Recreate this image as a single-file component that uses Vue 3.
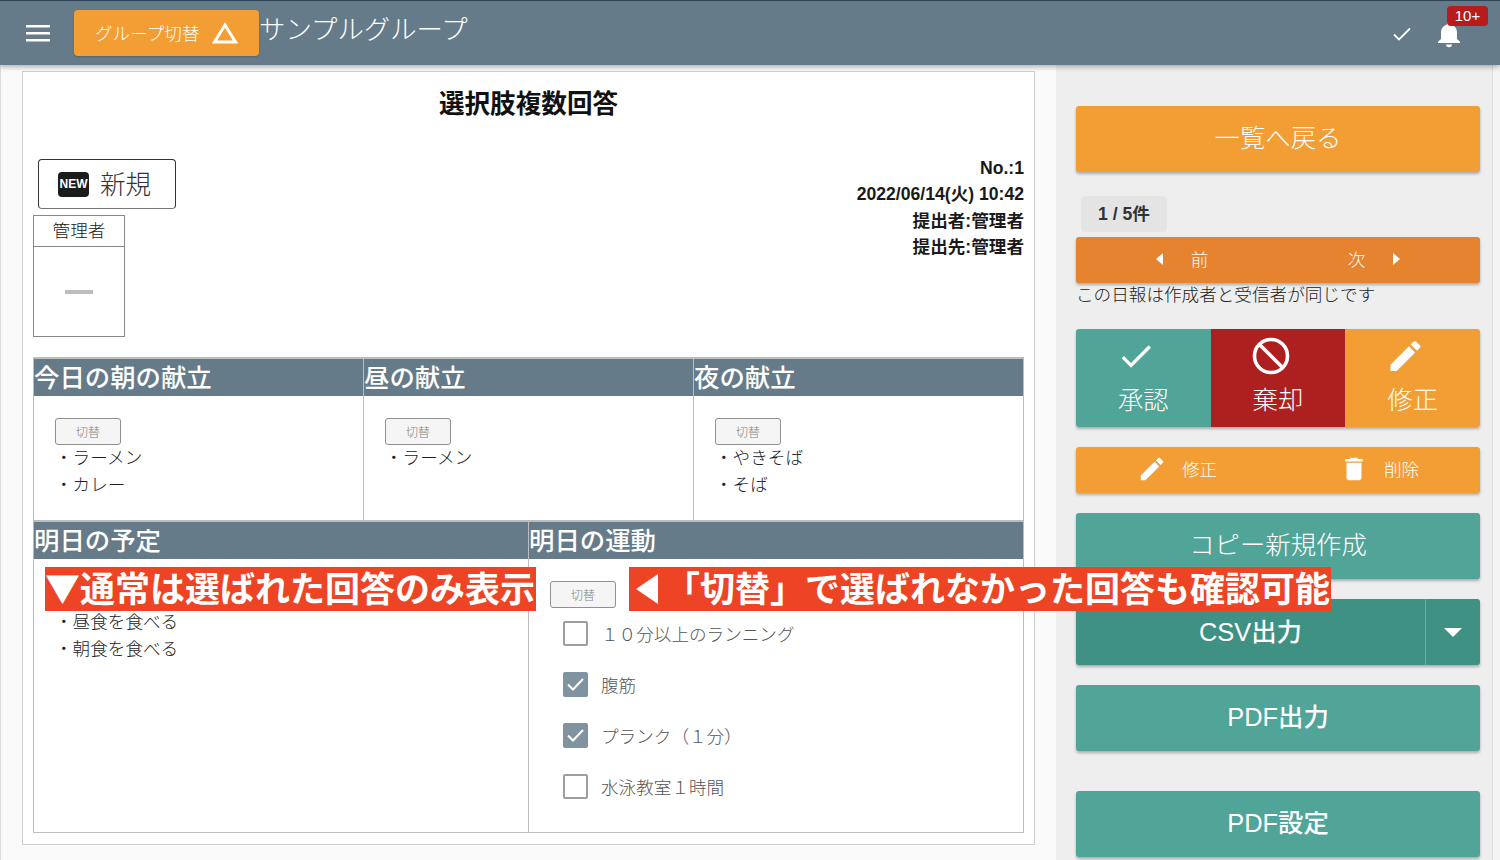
<script setup>
const topCards = [
  { title: '今日の朝の献立', items: ['ラーメン', 'カレー'] },
  { title: '昼の献立', items: ['ラーメン'] },
  { title: '夜の献立', items: ['やきそば', 'そば'] },
]
const planItems = ['昼食を食べる', '朝食を食べる']
const exercises = [
  { label: '１０分以上のランニング', checked: false },
  { label: '腹筋', checked: true },
  { label: 'プランク（１分）', checked: true },
  { label: '水泳教室１時間', checked: false },
]
const metaLines = ['No.:1', '2022/06/14(火) 10:42', '提出者:管理者', '提出先:管理者']
</script>

<template>
  <div class="page">
    <header class="topbar">
      <button class="menu">
        <svg width="24" height="24" viewBox="0 0 24 24"><path d="M0 4h24v2.400H0zM0 11h24v2.400H0zM0 18h24v2.400H0z" fill="#fff" /></svg>
      </button>
      <button class="group-btn">
        <span>グループ切替</span>
        <svg width="26" height="22" viewBox="0 0 26 22"><path d="M13 3 L23.500 20 H2.500 Z" fill="none" stroke="#fff" stroke-width="3" /></svg>
      </button>
      <div class="group-name">サンプルグループ</div>
      <div class="top-icons">
        <svg class="top-check" width="20" height="16" viewBox="0 0 20 16"><path d="M2 8.500 L7 13.500 L18 2.500" fill="none" stroke="#fff" stroke-width="1.800" /></svg>
        <div class="bell">
          <svg width="24" height="28" viewBox="0 0 24 28"><path d="M12 1.500c-1.200 0-2 .9-2 2v1C6.300 5.500 4 8.700 4 12.500V19l-3 2.800V23h22v-1.200L20 19v-6.500c0-3.800-2.300-7-6-8v-1c0-1.100-.8-2-2-2zM9 24.500c0 1.500 1.300 2.700 3 2.700s3-1.200 3-2.700z" fill="#fff" /></svg>
          <span class="badge">10+</span>
        </div>
      </div>
    </header>

    <div class="body">
      <main class="content">
        <section class="sheet">
          <h1 class="title">選択肢複数回答</h1>
          <div class="head-row">
            <div class="head-left">
              <div class="new-box">
                <span class="new-icon">NEW</span>
                <span class="new-text">新規</span>
              </div>
              <div class="stamp">
                <div class="stamp-name">管理者</div>
                <div class="stamp-body"><i></i></div>
              </div>
            </div>
            <div class="meta">
              <div v-for="line in metaLines" :key="line">{{ line }}</div>
            </div>
          </div>

          <div class="cols cols-3">
            <div v-for="card in topCards" :key="card.title" class="cell">
              <div class="cell-head">{{ card.title }}</div>
              <div class="cell-body">
                <button class="switch">切替</button>
                <div v-for="item in card.items" :key="item" class="dot-line">・{{ item }}</div>
              </div>
            </div>
          </div>

          <div class="cols cols-2">
            <div class="cell">
              <div class="cell-head">明日の予定</div>
              <div class="cell-body plan">
                <div v-for="item in planItems" :key="item" class="dot-line">・{{ item }}</div>
              </div>
            </div>
            <div class="cell">
              <div class="cell-head">明日の運動</div>
              <div class="cell-body">
                <button class="switch">切替</button>
                <div class="checks">
                  <div v-for="ex in exercises" :key="ex.label" class="check-row">
                    <span class="box" :class="{ on: ex.checked }">
                      <svg v-if="ex.checked" width="19" height="15" viewBox="0 0 19 15"><path d="M2 7.500 L7 12.500 L17 2" fill="none" stroke="#fff" stroke-width="2" /></svg>
                    </span>
                    <span class="check-label">{{ ex.label }}</span>
                  </div>
                </div>
              </div>
            </div>
          </div>
        </section>
      </main>

      <aside class="side">
        <button class="btn orange big">一覧へ戻る</button>
        <div class="count">1 / 5件</div>
        <div class="btn nav">
          <span class="nav-half"><i class="tri left"></i><span>前</span></span>
          <span class="nav-half"><span>次</span><i class="tri right"></i></span>
        </div>
        <p class="note">この日報は作成者と受信者が同じです</p>
        <div class="btn triple">
          <div class="tri-cell teal">
            <svg width="44" height="44" viewBox="0 0 24 24"><path d="M9 16.200 4.800 12l-1.400 1.400L9 19 21 7l-1.400-1.400z" fill="#fff" /></svg>
            <span>承認</span>
          </div>
          <div class="tri-cell red">
            <svg width="38" height="38" viewBox="0 0 38 38"><circle cx="19" cy="19" r="16.500" fill="none" stroke="#fff" stroke-width="3.600" /><path d="M7.500 7.500 L30.500 30.500" stroke="#fff" stroke-width="3.600" /></svg>
            <span>棄却</span>
          </div>
          <div class="tri-cell orange">
            <svg width="45" height="45" viewBox="0 0 24 24"><path d="M3 17.250V21h3.750L17.810 9.940l-3.750-3.750zM20.710 7.040a1 1 0 0 0 0-1.410l-2.340-2.340a1 1 0 0 0-1.410 0l-1.830 1.830 3.750 3.750z" fill="#fff" /></svg>
            <span>修正</span>
          </div>
        </div>
        <div class="btn orange duo">
          <span class="duo-item">
            <svg width="30" height="30" viewBox="0 0 24 24"><path d="M3 17.250V21h3.750L17.810 9.940l-3.750-3.750zM20.710 7.040a1 1 0 0 0 0-1.410l-2.340-2.340a1 1 0 0 0-1.410 0l-1.830 1.830 3.750 3.750z" fill="#fff" /></svg>
            修正
          </span>
          <span class="duo-item">
            <svg width="30" height="30" viewBox="0 0 24 24"><path d="M6 19c0 1.100.9 2 2 2h8c1.100 0 2-.9 2-2V7H6zM19 4h-3.500l-1-1h-5l-1 1H5v2h14z" fill="#fff" /></svg>
            削除
          </span>
        </div>
        <button class="btn teal-btn big copy">コピー新規作成</button>
        <div class="btn csv">
          <span class="csv-main">CSV出力</span>
          <span class="csv-arrow"><i></i></span>
        </div>
        <button class="btn teal-btn big pdf">PDF出力</button>
        <button class="btn teal-btn big pdf-set">PDF設定</button>
      </aside>

      <div class="scroll-strip"></div>
    </div>

    <div class="callout callout-a">▼通常は選ばれた回答のみ表示</div>
    <div class="callout callout-b"><i class="callout-tri"></i>「切替」で選ばれなかった回答も確認可能</div>
  </div>
</template>

<style scoped>
.page {
  position: relative;
  width: 1500px;
  height: 860px;
  overflow: hidden;
  background: #eeeeee;
  color: #212121;
  font-family: "Liberation Sans", "Noto Sans CJK JP", sans-serif;
  text-spacing-trim: space-all;
}
button {
  border: none;
  font-family: inherit;
  cursor: pointer;
}
.topbar {
  position: relative;
  z-index: 2;
  display: flex;
  align-items: flex-start;
  height: 65px;
  box-sizing: border-box;
  border-top: 1px solid #2c4257;
  background: #667b89;
  box-shadow: 0 2px 5px rgba(0, 0, 0, 0.3);
  color: #fff;
}
.menu {
  width: 24px;
  height: 24px;
  margin: 20px 0 0 26px;
  padding: 0;
  background: none;
}
.group-btn {
  display: flex;
  align-items: center;
  justify-content: space-between;
  box-sizing: border-box;
  width: 185px;
  height: 46px;
  margin: 9px 0 0 24px;
  padding: 0 21px 0 21px;
  border-radius: 4px;
  background: #f39d35;
  color: #fff;
  font-size: 17.600px;
  font-weight: 300;
  box-shadow: 0 1px 2px rgba(0, 0, 0, 0.2);
}
.group-btn span {
  margin-bottom: 2px;
  white-space: nowrap;
}
.group-btn svg {
  flex: none;
}
.group-name {
  margin-top: 10px;
  font-size: 26.400px;
  font-weight: 300;
  line-height: 38px;
}
.top-icons {
  display: flex;
  align-items: flex-start;
  margin-left: auto;
  padding-right: 39px;
}
.top-check {
  margin: 25px 25px 0 0;
}
.bell {
  position: relative;
  width: 24px;
  padding-top: 19px;
}
.badge {
  position: absolute;
  top: 5px;
  left: 10px;
  width: 41px;
  height: 20px;
  border-radius: 4px;
  background: #b71c1c;
  font-size: 15px;
  line-height: 20px;
  text-align: center;
}
.body {
  display: flex;
  height: 795px;
}
.content {
  box-sizing: border-box;
  width: 1056px;
  padding: 6px 21px 0 21px;
  background: #fafafa;
  border-left: 1px solid #ddd;
}
.sheet {
  box-sizing: border-box;
  height: 774px;
  padding: 0 10px;
  background: #fff;
  border: 1px solid #cfcfcf;
}
.title {
  height: 64px;
  margin: 0;
  padding-top: 15px;
  font-size: 25.600px;
  line-height: 34px;
  font-weight: 700;
  text-align: center;
  color: #111;
}
.head-row {
  display: flex;
  justify-content: space-between;
  height: 207px;
}
.head-left {
  width: 160px;
  padding-top: 8px;
}
.new-box {
  display: flex;
  align-items: center;
  box-sizing: border-box;
  width: 138px;
  height: 50px;
  margin-left: 5px;
  padding-left: 19px;
  border: 1px solid #333;
  border-bottom-color: #777;
  border-radius: 4px;
}
.new-icon {
  width: 31px;
  height: 25px;
  border-radius: 4px;
  background: #1b1b1b;
  color: #fff;
  font-size: 12px;
  font-weight: 700;
  line-height: 25px;
  text-align: center;
}
.new-text {
  margin: 0 0 4px 11px;
  font-size: 25.600px;
  font-weight: 300;
  color: #333;
}
.stamp {
  box-sizing: border-box;
  width: 92px;
  height: 122px;
  margin-top: 6px;
  border: 1px solid #888;
}
.stamp-name {
  height: 30px;
  border-bottom: 1px solid #888;
  font-size: 17.600px;
  font-weight: 300;
  line-height: 30px;
  text-align: center;
}
.stamp-body {
  display: flex;
  align-items: center;
  justify-content: center;
  height: 89px;
}
.stamp-body i {
  width: 28px;
  height: 4px;
  background: #bdbdbd;
}
.meta {
  margin-top: 4px;
  text-align: right;
  font-size: 17.600px;
  font-weight: 700;
  line-height: 26.400px;
  color: #1a1a1a;
}
.cols {
  display: grid;
  box-sizing: border-box;
  width: 991px;
  border: 1px solid #bdbdbd;
  border-bottom: none;
  border-top: none;
}
.cols-3 {
  grid-template-columns: 330px 330px 329px;
  height: 163px;
  margin-top: -1px;
}
.cols-2 {
  grid-template-columns: 495px 494px;
  height: 313px;
  border-bottom: 1px solid #bdbdbd;
}
.cell {
  border-right: 1px solid #bdbdbd;
  min-width: 0;
}
.cell:last-child {
  border-right: none;
}
.cell-head {
  height: 37px;
  border-top: 2px solid #bdbdbd;
  background: #667b89;
  color: #fff;
  font-size: 25.400px;
  font-weight: 500;
  line-height: 39px;
  white-space: nowrap;
}
.cell-body {
  padding: 22px 0 0 21px;
}
.switch {
  display: block;
  box-sizing: border-box;
  width: 66px;
  height: 27px;
  padding: 0;
  border: 1px solid #909090;
  border-radius: 3px;
  background: #f5f5f5;
  color: #808080;
  font-size: 12px;
  font-weight: 300;
}
.dot-line {
  font-size: 17.600px;
  font-weight: 300;
  line-height: 26.500px;
  color: #222;
}
.cell-body.plan {
  padding-top: 50px;
}
.checks {
  margin-left: 13px;
}
.check-row {
  display: flex;
  align-items: center;
  height: 51px;
}
.box {
  display: flex;
  align-items: center;
  justify-content: center;
  box-sizing: border-box;
  width: 25px;
  height: 25px;
  border: 2px solid #9e9e9e;
  border-radius: 2px;
}
.box.on {
  border: none;
  background: #8093a0;
}
.check-label {
  margin-left: 13px;
  font-size: 17.600px;
  font-weight: 300;
  color: #555;
}
.side {
  box-sizing: border-box;
  width: 436px;
  padding: 41px 12px 0 20px;
}
.btn {
  display: flex;
  width: 404px;
  border-radius: 3px;
  color: #fff;
  box-shadow: 0 2px 3px rgba(0, 0, 0, 0.28);
}
.big {
  align-items: center;
  justify-content: center;
  height: 66px;
  padding: 0 0 7px;
  font-size: 25.400px;
  font-weight: 300;
}
.orange {
  background: #f39d35;
  color: #fff;
}
.teal-btn {
  background: #50a498;
}
.count {
  width: 86px;
  height: 36px;
  margin: 24px 0 5px 5px;
  border-radius: 4px;
  background: #e4e4e4;
  font-size: 17.600px;
  font-weight: 700;
  line-height: 36px;
  text-align: center;
  color: #333;
}
.nav {
  box-sizing: border-box;
  height: 46px;
  padding: 0 10px 3px;
  background: #e6832f;
  font-size: 17.600px;
  font-weight: 300;
}
.nav-half {
  flex: 1;
  display: flex;
  align-items: center;
  justify-content: center;
  gap: 28px;
}
.tri {
  width: 0;
  height: 0;
  border-top: 6px solid transparent;
  border-bottom: 6px solid transparent;
}
.tri.left {
  border-right: 7px solid #fff;
}
.tri.right {
  border-left: 7px solid #fff;
}
.note {
  height: 24px;
  margin: 0 0 22px;
  font-size: 17.600px;
  font-weight: 300;
  line-height: 24px;
  white-space: nowrap;
  color: #222;
}
.triple {
  height: 98px;
  overflow: hidden;
}
.tri-cell {
  flex: 1;
  display: flex;
  flex-direction: column;
  align-items: center;
  justify-content: flex-start;
  padding-top: 7px;
  font-size: 25.400px;
  font-weight: 300;
  line-height: 34px;
}
.tri-cell svg {
  height: 40px;
  margin: 0 14px 7px 0;
  overflow: visible;
}
.tri-cell.teal {
  background: #50a498;
}
.tri-cell.red {
  background: #ae2020;
}
.duo {
  align-items: center;
  box-sizing: border-box;
  height: 46px;
  margin-top: 20px;
  padding-bottom: 3px;
  font-size: 17.600px;
  font-weight: 300;
}
.duo-item {
  flex: 1;
  display: flex;
  align-items: center;
  justify-content: center;
  gap: 15px;
}
.copy {
  margin-top: 20px;
}
.csv {
  box-sizing: border-box;
  height: 66px;
  margin-top: 20px;
  background: #3f9184;
  font-size: 25.400px;
  font-weight: 500;
}
.csv-main {
  flex: 1;
  display: flex;
  align-items: center;
  justify-content: center;
  padding-bottom: 5px;
}
.csv-arrow {
  display: flex;
  align-items: center;
  justify-content: center;
  width: 54px;
  border-left: 1px solid rgba(255, 255, 255, 0.25);
}
.csv-arrow i {
  border-left: 9px solid transparent;
  border-right: 9px solid transparent;
  border-top: 9px solid #fff;
}
.pdf {
  margin-top: 20px;
  font-weight: 500;
}
.pdf-set {
  margin-top: 40px;
  font-weight: 500;
}
.scroll-strip {
  box-sizing: border-box;
  width: 8px;
  height: 100%;
  background: #f4f4f4;
  border-left: 1px solid #dcdcdc;
}
.callout {
  position: absolute;
  z-index: 3;
  top: 567px;
  display: flex;
  align-items: center;
  box-sizing: border-box;
  height: 44px;
  padding-bottom: 5px;
  background: #ec4424;
  color: #fff;
  font-family: "Noto Sans CJK JP", sans-serif;
  font-size: 35px;
  font-weight: 700;
  white-space: nowrap;
}
.callout-a {
  left: 45px;
  width: 491px;
}
.callout-b {
  left: 629px;
  width: 702px;
}
.callout-tri {
  width: 0;
  height: 0;
  margin: 5px 7px 0 7px;
  border-top: 15px solid transparent;
  border-bottom: 15px solid transparent;
  border-right: 22px solid #fff;
}
</style>
